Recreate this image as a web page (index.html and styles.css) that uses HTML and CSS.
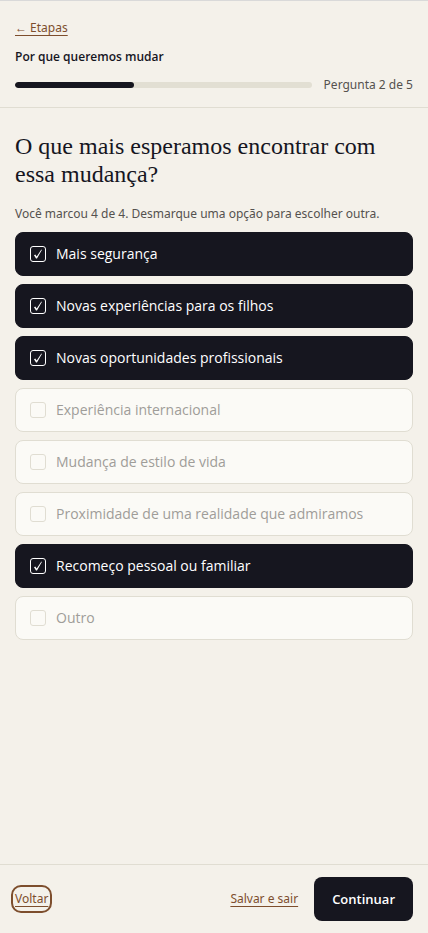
FILE: index.html
```html
<!DOCTYPE html>
<html lang="pt-BR">
<head>
<meta charset="utf-8">
<meta name="viewport" content="width=device-width, initial-scale=1">
<title>Por que queremos mudar</title>
<link rel="stylesheet" href="styles.css">
</head>
<body>
<header class="top">
  <a class="link back" href="#etapas">← Etapas</a>
  <p class="stage">Por que queremos mudar</p>
  <div class="progress">
    <div class="track" role="progressbar" aria-label="Progresso" aria-valuemin="0" aria-valuemax="5" aria-valuenow="2"><div class="fill" style="width: 40%"></div></div>
    <span class="count">Pergunta 2 de 5</span>
  </div>
</header>
<main class="question">
  <h1 class="title">O que mais esperamos encontrar com essa mudança?</h1>
  <p class="hint">Você marcou 4 de 4. Desmarque uma opção para escolher outra.</p>
  <div class="options">
    <label class="option"><input class="box" type="checkbox" checked><span>Mais segurança</span></label>
    <label class="option"><input class="box" type="checkbox" checked><span>Novas experiências para os filhos</span></label>
    <label class="option"><input class="box" type="checkbox" checked><span>Novas oportunidades profissionais</span></label>
    <label class="option"><input class="box" type="checkbox" disabled><span>Experiência internacional</span></label>
    <label class="option"><input class="box" type="checkbox" disabled><span>Mudança de estilo de vida</span></label>
    <label class="option"><input class="box" type="checkbox" disabled><span>Proximidade de uma realidade que admiramos</span></label>
    <label class="option"><input class="box" type="checkbox" checked><span>Recomeço pessoal ou familiar</span></label>
    <label class="option"><input class="box" type="checkbox" disabled><span>Outro</span></label>
  </div>
</main>
<footer class="actions">
  <button class="link previous" type="button">Voltar</button>
  <button class="link" type="button">Salvar e sair</button>
  <button class="primary" type="button">Continuar</button>
</footer>
</body>
</html>
```
FILE: styles.css
```css
:root {
  --paper: #f4f1ea;
  --card: #fbfaf6;
  --ink: #16161f;
  --muted: #55524f;
  --line: #e0ddd2;
  --accent: #7d4e2d;
}

* {
  box-sizing: border-box;
}

body {
  margin: 0;
  min-height: 100vh;
  display: flex;
  flex-direction: column;
  background: var(--paper);
  color: var(--ink);
  font: 12px/20px "Noto Sans", "Open Sans", sans-serif;
  border-top: 1px solid #d9d9d9;
}

p,
h1 {
  margin: 0;
}

.top {
  display: flex;
  flex-direction: column;
  gap: 8px;
  padding: 16px 15px 12px;
  border-bottom: 1px solid var(--line);
}

.link {
  padding: 0;
  border: 0;
  background: none;
  color: var(--accent);
  font: inherit;
  text-decoration: underline;
  text-underline-offset: 3px;
  cursor: pointer;
}

.back {
  align-self: flex-start;
  line-height: 22px;
}

.stage {
  font-family: "Open Sans", "Noto Sans", sans-serif;
  font-weight: 600;
}

.progress {
  display: flex;
  align-items: center;
  gap: 12px;
}

.track {
  flex: 1;
  height: 6px;
  border-radius: 3px;
  background: #e2dfd3;
  overflow: hidden;
}

.fill {
  height: 100%;
  border-radius: 3px;
  background: var(--ink);
}

.count,
.hint {
  color: var(--muted);
}

.question {
  flex: 1;
  padding: 24px 15px;
}

.title {
  font: 400 24px/28px "Palatino Linotype", Palatino, "Liberation Serif", serif;
}

.hint {
  margin-top: 16px;
}

.options {
  display: flex;
  flex-direction: column;
  gap: 8px;
  margin-top: 8px;
}

.option {
  display: flex;
  align-items: center;
  gap: 10px;
  min-height: 44px;
  padding: 8px 14px;
  border: 1px solid var(--line);
  border-radius: 8px;
  background: var(--card);
  color: #9f9d99;
  font-family: "Open Sans", "Noto Sans", sans-serif;
  font-size: 14px;
}

.option:has(:checked) {
  border-color: var(--ink);
  background: var(--ink);
  color: #fff;
}

.box {
  appearance: none;
  flex: none;
  width: 16px;
  height: 16px;
  margin: 0;
  border: 1px solid var(--line);
  border-radius: 3px;
}

.box:checked {
  border-color: #fff;
  background: url("data:image/svg+xml,%3Csvg xmlns='http://www.w3.org/2000/svg' viewBox='0 0 14 14'%3E%3Cpath d='M3 8.2L4.3 7.5L5.7 9.5L10.2 2.8L11 2.8L6 11.4L5 11.4Z' fill='white'/%3E%3C/svg%3E") center / 14px 14px no-repeat;
}

.actions {
  display: flex;
  align-items: center;
  gap: 16px;
  padding: 12px 15px;
  border-top: 1px solid var(--line);
}

.previous {
  margin-right: auto;
  line-height: 20px;
  border-radius: 6px;
  outline: 2px solid var(--accent);
  outline-offset: 2px;
}

.primary {
  min-height: 44px;
  padding: 0 18px;
  border: 0;
  border-radius: 8px;
  background: var(--ink);
  color: #fff;
  font: 600 13px/20px "Open Sans", "Noto Sans", sans-serif;
  cursor: pointer;
}
```
